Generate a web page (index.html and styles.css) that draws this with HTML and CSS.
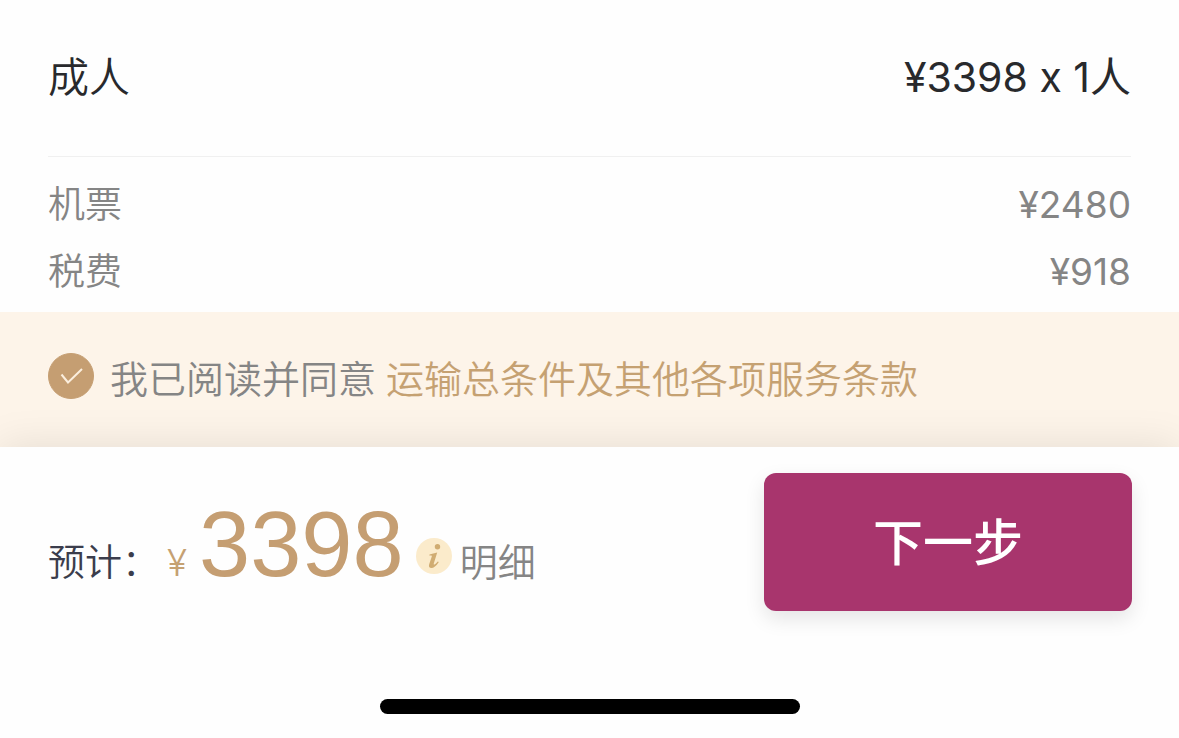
FILE: index.html
```
<!DOCTYPE html>
<html lang="zh-CN">
<head>
  <meta charset="UTF-8" />
  <meta name="viewport" content="width=device-width, initial-scale=1.0" />
  <title>订单确认</title>
  <link rel="stylesheet" href="styles.css">
</head>
<body>
  <main>
    <section class="fare">
      <div class="fare-total">
        <span>成人</span>
        <span class="price">¥3398 x 1人</span>
      </div>
      <dl class="fare-items">
        <div class="fare-row">
          <dt>机票</dt>
          <dd class="price">¥2480</dd>
        </div>
        <div class="fare-row">
          <dt>税费</dt>
          <dd class="price">¥918</dd>
        </div>
      </dl>
    </section>

    <section class="terms">
      <span class="check">
        <input type="checkbox" id="agree" checked />
        <svg viewBox="0 0 46 46" aria-hidden="true">
          <path d="M13.5 21.5 L20 29.5 L34 16" />
        </svg>
      </span>
      <label for="agree">我已阅读并同意</label>
      <a href="#">运输总条件及其他各项服务条款</a>
    </section>
  </main>

  <footer>
    <div class="pay">
      <div class="estimate">
        <span class="estimate-label">预计：</span>
        <span class="currency">¥</span>
        <span class="amount">3398</span>
        <button type="button" class="detail">
          <svg viewBox="0 0 36 36" aria-hidden="true">
            <circle class="info-bg" cx="18" cy="18" r="18" />
            <circle class="info-mark" cx="21.5" cy="8.8" r="2.7" />
            <path class="info-mark" d="M13.5 16.5 C16 15.8 18.5 15 21.2 14.4 L17.8 25.6 C17.4 27.2 18.4 27.2 21.8 23.4 L22.8 24 C20.2 28.2 17.6 30 15.4 30 C13.2 30 12.5 28.4 13.2 26.2 L15.8 18.4 C16 17.4 15.4 17.3 13.3 17.6 Z" />
          </svg>
          <span>明细</span>
        </button>
      </div>
      <button type="button" class="next">下一步</button>
    </div>
    <div class="home-bar"></div>
  </footer>
</body>
</html>
```
FILE: styles.css
```
* {
  box-sizing: border-box;
}
body {
  margin: 0;
  font-family: Inter, "Noto Sans CJK SC", sans-serif;
  font-size: 37px;
  font-weight: 350;
  font-feature-settings: "calt" 0;
  line-height: 48px;
  background-color: #fefefe;
  color: #858585;
}
button {
  margin: 0;
  padding: 0;
  border: none;
  background: none;
  font-family: inherit;
  cursor: pointer;
}
.fare {
  padding: 0 48px;
}
.fare-total {
  display: flex;
  justify-content: space-between;
  align-items: center;
  height: 157px;
  padding-bottom: 2px;
  border-bottom: 1px solid #f0f0f0;
  font-size: 41px;
  color: #28292c;
}
.fare-items {
  margin: 0;
  padding: 14px 0 7px;
}
.fare-row {
  display: flex;
  justify-content: space-between;
  align-items: center;
  height: 67px;
}
.fare-row dd {
  margin: 0;
}
.price {
  font-weight: 400;
}
.terms {
  display: flex;
  align-items: flex-start;
  padding: 41px 48px 42px;
  background-color: #fdf4e9;
  font-size: 38px;
  line-height: 52px;
}
.check {
  display: grid;
  width: 46px;
  height: 46px;
  margin-right: 16px;
}
.check input,
.check svg {
  grid-area: 1 / 1;
  width: 46px;
  height: 46px;
  margin: 0;
}
.check input {
  appearance: none;
  border: 1px solid #c59e72;
  border-radius: 50%;
}
.check input:checked {
  background-color: #c59e72;
}
.check svg {
  fill: none;
  stroke: #fbeedd;
  stroke-width: 2;
  pointer-events: none;
}
.terms a {
  margin-left: 10px;
  color: #c5a172;
  text-decoration: none;
}
footer {
  background-color: #fefefe;
  box-shadow: 0 0 40px rgba(0, 0, 0, 0.1);
}
.pay {
  display: flex;
  justify-content: space-between;
  padding: 26px 47px 88px 48px;
}
.estimate {
  display: flex;
  align-items: baseline;
  padding-top: 23px;
}
.estimate-label {
  color: #3b3d4c;
}
.currency {
  margin-left: 8px;
  color: #c5a172;
}
.amount {
  margin-left: 12px;
  font-family: "Liberation Sans", sans-serif;
  font-size: 92px;
  line-height: 96px;
  color: #c59e72;
}
.detail {
  display: flex;
  align-items: baseline;
  gap: 8px;
  margin-left: 12px;
  font-size: 38px;
  font-weight: 350;
  line-height: 48px;
  color: #858585;
}
.detail svg {
  align-self: flex-start;
  width: 36px;
  height: 36px;
}
.info-bg {
  fill: #fbebcb;
}
.info-mark {
  fill: #d0ac72;
}
.next {
  width: 368px;
  height: 138px;
  padding-bottom: 6px;
  border-radius: 12px;
  background-color: #a8356d;
  box-shadow: 0 8px 20px rgba(0, 0, 0, 0.1);
  font-size: 50px;
  font-weight: 500;
  color: #ffffff;
}
.home-bar {
  width: 420px;
  height: 15px;
  margin: 0 auto;
  border-radius: 8px;
  background-color: #000000;
}
```
